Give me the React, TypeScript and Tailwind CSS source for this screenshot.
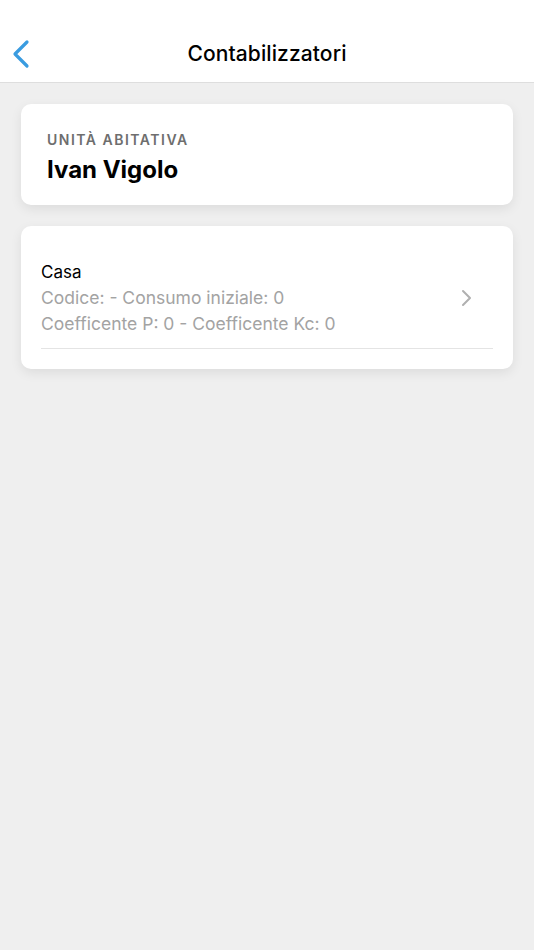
import React from "react";

export default function App() {
  return (
    <div
      className="w-[534px] h-[950px] bg-[#efefef] flex flex-col"
      style={{ fontFamily: "Inter, 'Noto Sans', sans-serif" }}
    >
      <div className="h-[83px] bg-white border-b border-[#dedede] flex items-center relative shrink-0">
        <svg
          className="absolute left-[11px] top-[39px]"
          width="20"
          height="30"
          viewBox="0 0 20 30"
          fill="none"
        >
          <path
            d="M16 3 L4 15 L16 27"
            stroke="#3a9ce0"
            strokeWidth="3.2"
            strokeLinecap="round"
            strokeLinejoin="round"
          />
        </svg>
        <div className="w-full text-center text-[21px] font-medium text-black pt-[25px] tracking-[0.1px]">
          Contabilizzatori
        </div>
      </div>

      <div className="flex flex-col gap-[21px] px-[21px] pt-[21px]">
        <div className="bg-white rounded-[10px] shadow-[0_4px_12px_rgba(0,0,0,0.08)] px-[26px] pt-[27px] h-[101px]">
          <div className="text-[14px] font-semibold tracking-[1.5px] text-[#6e6e6e] leading-[18px]">
            UNITÀ ABITATIVA
          </div>
          <div className="text-[24px] font-bold text-black leading-[30px] mt-[6px]">
            Ivan Vigolo
          </div>
        </div>

        <div className="bg-white rounded-[10px] shadow-[0_4px_12px_rgba(0,0,0,0.08)] px-[20px] pt-[35px] h-[143px]">
          <div className="flex items-center">
            <div className="flex-1">
              <div className="text-[17px] text-black leading-[22px]">Casa</div>
              <div className="text-[17.5px] text-[#a3a3a3] leading-[26px] mt-[2px]">
                Codice: - Consumo iniziale: 0
              </div>
              <div className="text-[17.5px] text-[#a3a3a3] leading-[26px]">
                Coefficente P: 0 - Coefficente Kc: 0
              </div>
            </div>
            <svg width="14" height="20" viewBox="0 0 14 20" fill="none" className="mr-[19px] mt-[-2px]">
              <path
                d="M3 3 L10 10 L3 17"
                stroke="#b0b0b0"
                strokeWidth="2"
                strokeLinecap="round"
                strokeLinejoin="round"
              />
            </svg>
          </div>
          <div className="h-px bg-[#e4e4e4] mt-[11px]" />
        </div>
      </div>
    </div>
  );
}
